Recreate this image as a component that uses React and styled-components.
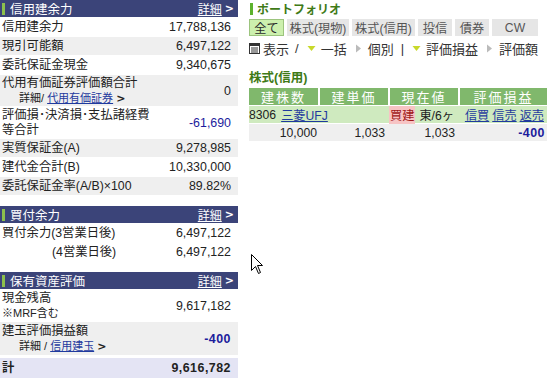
import styled, { createGlobalStyle } from "styled-components";

const GlobalStyle = createGlobalStyle`
  body{
    margin:0;
    background:#fff;
    font-family:"Liberation Sans","Noto Sans CJK JP",sans-serif;
    font-size:12px;
    color:#222;
  }
`

const Page = styled.div`
  position:relative;
  width:547px;
  height:380px;
  overflow:hidden;
  display:flex;
  gap:11px;
`
const Left = styled.div`
  width:238px;
  flex-shrink:0;
  display:flex;
  flex-direction:column;
`
const Section = styled.div`
  display:flex;
  flex-direction:column;
  gap:1px;
  margin-bottom:${props=>props.mb||0}px;
`
const Head = styled.div`
  height:17px;
  background:#3b4479;
  color:#fff;
  display:flex;
  align-items:center;
  justify-content:space-between;
  padding:0 4px 0 2px;
  font-size:12.5px;
`
const HeadTitle = styled.span`
  display:flex;
  align-items:center;
  gap:5px;
`
const Accent = styled.span`
  width:3px;
  height:12px;
  background:#8cc04c;
`
const More = styled.span`
  color:#fff;
  font-size:12px;
  display:flex;
  align-items:center;
  gap:3px;
  u{ text-decoration:underline; }
`
const Chev = styled.span`
  font-weight:bold;
  font-size:11px;
  font-family:"DejaVu Sans",sans-serif;
`
const Row = styled.div`
  display:flex;
  justify-content:space-between;
  align-items:center;
  min-height:${props=>props.h||18}px;
  padding:0 7px 0 2px;
  background:${props=>props.tone==="gray"?"#efefef":props.tone==="blue"?"#e4e4f4":"#fff"};
  font-weight:${props=>props.bold?"bold":"normal"};
`
const Label = styled.div`
  display:flex;
  flex-direction:column;
  line-height:15px;
  font-size:12.3px;
`
const Sub = styled.span`
  font-size:11px;
  line-height:15px;
  padding-left:${props=>props.indent||0}px;
`
const Link = styled.a`
  color:#1f3a9e;
  text-decoration:underline;
  cursor:pointer;
`
const Value = styled.span`
  font-size:12.4px;
  color:${props=>props.neg?"#1c1c9c":"#222"};
  font-weight:${props=>props.strong?"bold":"inherit"};
  letter-spacing:${props=>props.strong?"0.5px":"0"};
`
const Indented = styled.span`
  padding-left:${props=>props.indent}px;
`

const Right = styled.div`
  flex:1;
  display:flex;
  flex-direction:column;
`
const Title = styled.div`
  display:flex;
  align-items:center;
  gap:4px;
  height:17px;
  font-weight:bold;
  font-size:12px;
  color:#3f7a17;
  margin-left:1px;
`
const GreenBar = styled.span`
  width:3px;
  height:12px;
  background:#5db22e;
`
const Tabs = styled.div`
  display:flex;
  gap:3px;
  margin-top:2px;
`
const Tab = styled.div`
  width:${props=>props.w}px;
  height:17px;
  box-sizing:border-box;
  display:flex;
  align-items:center;
  justify-content:center;
  font-size:12.2px;
  background:${props=>props.active?"#ccf0ae":"#e6e6e6"};
  border:1px solid ${props=>props.active?"#9cc47e":"#e6e6e6"};
  color:${props=>props.active?"#2a2a2a":"#555"};
`
const Toolbar = styled.div`
  display:flex;
  align-items:center;
  height:17px;
  margin-top:4px;
  font-size:13px;
  color:#333;
  white-space:nowrap;
`
const Tool = styled.span`
  margin-right:${props=>props.mr||0}px;
`
const SubTitle = styled.div`
  margin-top:14px;
  font-weight:bold;
  font-size:12.5px;
  color:#3f7a17;
  height:15px;
  line-height:15px;
`
const Grid = styled.div`
  display:grid;
  grid-template-columns:69px 68px 68px 1fr;
  column-gap:2px;
  row-gap:1px;
  margin-top:2px;
`
const Th = styled.div`
  height:17px;
  background:#80b86c;
  color:#fff;
  font-size:13px;
  display:flex;
  align-items:center;
  justify-content:center;
  letter-spacing:2px;
`
const Td = styled.div`
  height:17px;
  display:flex;
  align-items:center;
  justify-content:${props=>props.align||"flex-end"};
  gap:${props=>props.gap||0}px;
  padding:0 ${props=>props.pr||3}px 0 0;
  background:${props=>props.tone==="green"?"#cfeabf":"#efefef"};
  grid-column:${props=>props.span?`span ${props.span}`:"auto"};
  margin-right:${props=>props.fill?-2:0}px;
  font-size:12.2px;
`
const Tag = styled.span`
  background:#f7c4c4;
  color:#a01818;
  padding:0 1px;
  margin-left:-1px;
`
const Cursor = styled.svg`
  position:absolute;
  left:251px;
  top:254px;
`

const Tri = ({dir,color})=>(
  <svg width="9" height="9" viewBox="0 0 9 9" style={{margin:"0 5px 0 0"}}>
    {dir==="down"
      ?<polygon points="0.5,2 8.5,2 4.5,7" fill={color}/>
      :<polygon points="2,0.5 7,4.5 2,8.5" fill={color}/>}
  </svg>
)

const ListIcon = ()=>(
  <svg width="11" height="11" viewBox="0 0 11 11" style={{marginRight:3}}>
    <rect x="0.5" y="0.5" width="10" height="10" fill="#fff" stroke="#333"/>
    <rect x="0.5" y="0.5" width="10" height="2.5" fill="#333"/>
    <line x1="2" y1="5" x2="9" y2="5" stroke="#333"/>
    <line x1="2" y1="7" x2="9" y2="7" stroke="#333"/>
    <line x1="2" y1="9" x2="9" y2="9" stroke="#333"/>
  </svg>
)

const SectionHead = ({title})=>(
  <Head>
    <HeadTitle><Accent/>{title}</HeadTitle>
    <More><u>詳細</u><Chev>&gt;</Chev></More>
  </Head>
)

const App = () => {
  return (
    <>
    <GlobalStyle/>
    <Page>
      <Left>
        <Section mb={11}>
          <SectionHead title="信用建余力"/>
          <Row><Label>信用建余力</Label><Value>17,788,136</Value></Row>
          <Row tone="gray"><Label>現引可能額</Label><Value>6,497,122</Value></Row>
          <Row><Label>委託保証金現金</Label><Value>9,340,675</Value></Row>
          <Row tone="gray" h={31}>
            <Label>代用有価証券評価額合計
              <Sub indent={17}>詳細/ <Link>代用有価証券</Link> <Chev>&gt;</Chev></Sub>
            </Label>
            <Value>0</Value>
          </Row>
          <Row h={31}>
            <Label>評価損･決済損･支払諸経費<span>等合計</span></Label>
            <Value neg>-61,690</Value>
          </Row>
          <Row tone="gray"><Label>実質保証金(A)</Label><Value>9,278,985</Value></Row>
          <Row><Label>建代金合計(B)</Label><Value>10,330,000</Value></Row>
          <Row tone="gray"><Label>委託保証金率(A/B)×100</Label><Value>89.82%</Value></Row>
        </Section>

        <Section mb={11}>
          <SectionHead title="買付余力"/>
          <Row><Label>買付余力(3営業日後)</Label><Value>6,497,122</Value></Row>
          <Row><Label><Indented indent={50}>(4営業日後)</Indented></Label><Value>6,497,122</Value></Row>
        </Section>

        <Section>
          <SectionHead title="保有資産評価"/>
          <Row h={31}>
            <Label>現金残高<Sub>※MRF含む</Sub></Label>
            <Value>9,617,182</Value>
          </Row>
          <Row tone="gray" h={33}>
            <Label>建玉評価損益額
              <Sub indent={17}>詳細 / <Link>信用建玉</Link> <Chev>&gt;</Chev></Sub>
            </Label>
            <Value neg strong>-400</Value>
          </Row>
          <Row tone="blue" h={20} bold style={{marginTop:2}}>
            <Label>計</Label><Value strong>9,616,782</Value>
          </Row>
        </Section>
      </Left>

      <Right>
        <Title><GreenBar/>ポートフォリオ</Title>
        <Tabs>
          <Tab active w={35}>全て</Tab>
          <Tab w={62}>株式(現物)</Tab>
          <Tab w={63}>株式(信用)</Tab>
          <Tab w={34}>投信</Tab>
          <Tab w={34}>債券</Tab>
          <Tab w={46}>CW</Tab>
        </Tabs>
        <Toolbar>
          <ListIcon/>
          <Tool mr={6}>表示</Tool>
          <Tool mr={8}>/</Tool>
          <Tri dir="down" color="#c8d92a"/>
          <Tool mr={7}>一括</Tool>
          <Tri dir="right" color="#bbb"/>
          <Tool mr={7}>個別</Tool>
          <Tool mr={8}>|</Tool>
          <Tri dir="down" color="#c8d92a"/>
          <Tool mr={7}>評価損益</Tool>
          <Tri dir="right" color="#bbb"/>
          <Tool>評価額</Tool>
        </Toolbar>
        <SubTitle>株式(信用)</SubTitle>
        <Grid>
          <Th>建株数</Th>
          <Th>建単価</Th>
          <Th>現在値</Th>
          <Th>評価損益</Th>
          <Td tone="green" span={2} align="flex-start" gap={5} fill>8306 <Link>三菱UFJ</Link></Td>
          <Td tone="green" align="flex-start" gap={4} fill><Tag>買建</Tag>東/6ヶ</Td>
          <Td tone="green" gap={3} pr={0}><Link>信買</Link><Link>信売</Link><Link>返売</Link></Td>
          <Td pr={3} fill>10,000</Td>
          <Td pr={5} fill>1,033</Td>
          <Td pr={5} fill>1,033</Td>
          <Td pr={2}><Value neg strong>-400</Value></Td>
        </Grid>
      </Right>

      <Cursor width="13" height="21" viewBox="0 0 13 21">
        <path d="M0.5,0.5 L0.5,16.5 L4.5,12.5 L7.5,19.5 L9.5,18.5 L6.5,11.5 L11.5,11.5 Z" fill="#fff" stroke="#000" strokeWidth="1"/>
      </Cursor>
    </Page>
    </>
  )
}

export default App
